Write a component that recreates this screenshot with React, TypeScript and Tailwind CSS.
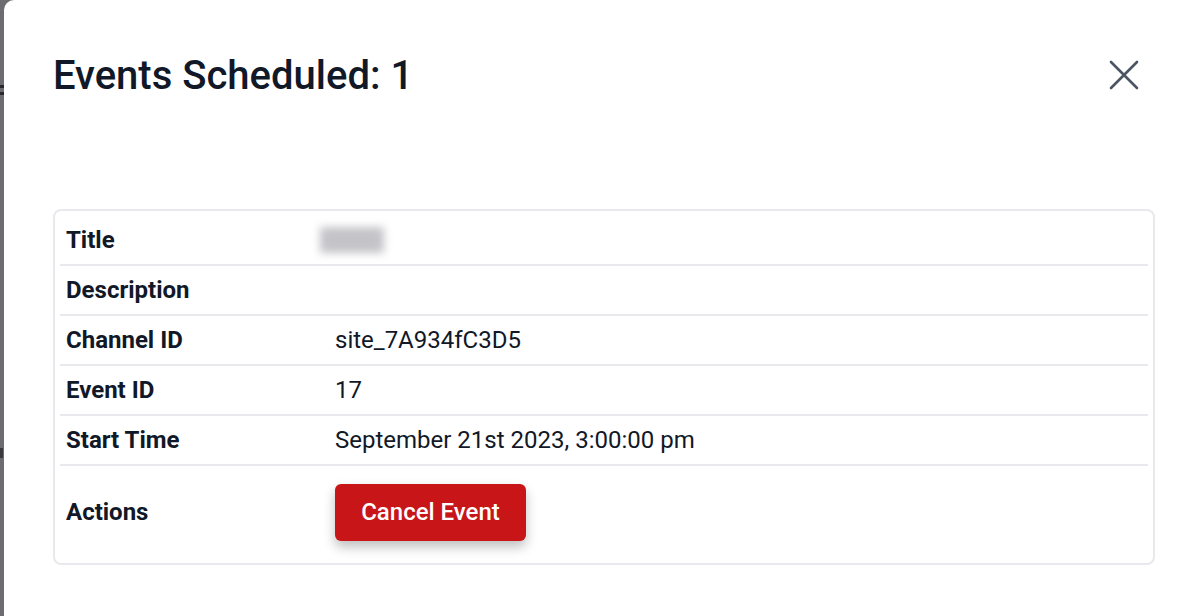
import React from "react";

function Row({ label, children, last }: any) {
  return (
    <div
      className={
        "grid grid-cols-[269px_1fr] items-center " +
        (last ? "h-[92px]" : "h-[50px] border-b-2 border-[#e8e9ec]")
      }
    >
      <div className="pl-[6px] text-[24px] font-bold text-[#111827]">{label}</div>
      <div className="pl-[6px] text-[24px] text-[#111827]">{children}</div>
    </div>
  );
}

export default function App() {
  return (
    <div
      className="flex h-[616px] w-[1200px] overflow-hidden bg-[#6d6d71]"
      style={{ fontFamily: "Roboto, 'Liberation Sans', sans-serif" }}
    >
      <div className="relative w-[4px] shrink-0">
        <div className="absolute left-0 top-[85px] h-[3px] w-[4px] bg-[#2a2a2e]" />
        <div className="absolute left-0 top-[92px] h-[3px] w-[4px] bg-[#2a2a2e]" />
        <div className="absolute left-0 top-[448px] h-[10px] w-[3px] bg-[#3a3a3e]" />
      </div>
      <div className="flex-1 rounded-tl-[10px] bg-white pl-[49px] pr-[45px]">
        <div className="flex items-start justify-between pt-[52px]">
          <h2 className="text-[40px] font-medium leading-[48px] text-[#111827]">
            Events Scheduled: 1
          </h2>
          <button className="mr-[15px] mt-[7px] text-[#4b5563]">
            <svg width="32" height="32" viewBox="0 0 32 32" fill="none">
              <path
                d="M3 3L29 29M29 3L3 29"
                stroke="currentColor"
                strokeWidth="2.6"
                strokeLinecap="round"
              />
            </svg>
          </button>
        </div>

        <div className="mt-[109px] rounded-[8px] border-2 border-[#e8e9ec] px-[5px] pb-[5px] pt-[5px]">
          <Row label="Title">
            <div className="ml-[-15px] h-[26px] w-[64px] bg-[#c4c4c8] blur-[4px]" />
          </Row>
          <Row label="Description"></Row>
          <Row label="Channel ID">site_7A934fC3D5</Row>
          <Row label="Event ID">17</Row>
          <Row label="Start Time">September 21st 2023, 3:00:00 pm</Row>
          <Row label="Actions" last>
            <button className="h-[57px] w-[191px] rounded-[6px] bg-[#c81518] text-[24px] font-medium text-white shadow-[0_6px_12px_rgba(0,0,0,0.25)]">
              Cancel Event
            </button>
          </Row>
        </div>
      </div>
    </div>
  );
}
